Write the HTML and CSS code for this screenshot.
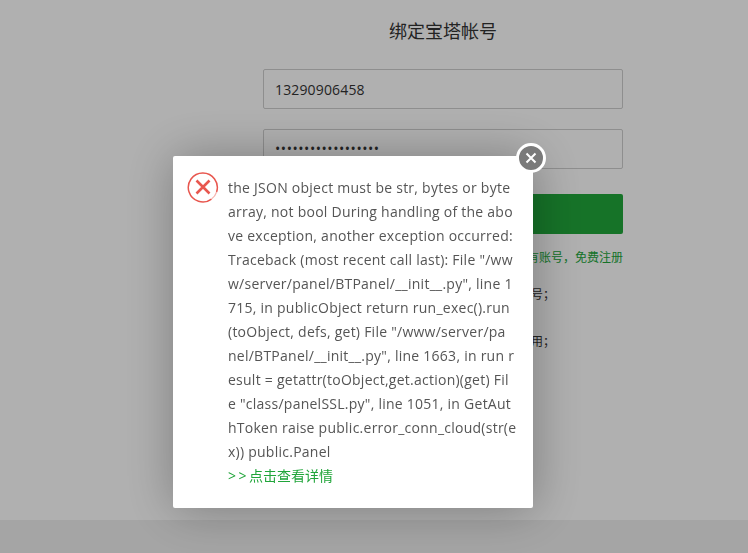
FILE: index.html
```html
<!DOCTYPE html>
<html lang="zh-CN">
<head>
<meta charset="utf-8">
<title>绑定宝塔帐号</title>
<link rel="stylesheet" href="styles.css">
</head>
<body>
<main class="page">
  <form class="bind">
    <h1 class="title">绑定宝塔帐号</h1>
    <div class="field">13290906458</div>
    <div class="field dots">••••••••••••••••••</div>
    <div class="submit"></div>
    <div class="reg">有账号，免费注册</div>
    <div class="tip">号；</div>
    <div class="tip">用；</div>
  </form>
</main>
<footer class="foot"></footer>
<div class="shade"></div>
<div class="dialog">
  <svg class="err" viewBox="0 0 32 32" width="32" height="32" aria-hidden="true">
    <path d="M24.5 28.1A14.5 14.5 0 1 1 29.6 21" fill="none" stroke="#e8574f" stroke-width="1.5"/>
    <path d="M29.6 21A14.5 14.5 0 0 1 24.5 28.1" fill="none" stroke="#f6b5b0" stroke-width="1.2"/>
    <path d="M9.5 9.5 22.5 22.5M22.5 9.5 9.5 22.5" stroke="#e8574f" stroke-width="2.6" fill="none"/>
  </svg>
  <div class="msg">
    <p class="body">the JSON object must be str, bytes or byte<br>array, not bool During handling of the abo<br>ve exception, another exception occurred:<br>Traceback (most recent call last): File "/ww<br>w/server/panel/BTPanel/__init__.py", line 1<br>715, in publicObject return run_exec().run<br>(toObject, defs, get) File "/www/server/pa<br>nel/BTPanel/__init__.py", line 1663, in run r<br>esult = getattr(toObject,get.action)(get) Fil<br>e "class/panelSSL.py", line 1051, in GetAut<br>hToken raise public.error_conn_cloud(str(e<br>x)) public.Panel</p>
    <a class="more"><span class="arrows">&gt;&gt;</span>点击查看详情</a>
  </div>
  <button class="close" type="button" aria-label="关闭">
    <svg viewBox="0 0 12 12" width="12" height="12" aria-hidden="true"><path d="M1.5 1.5 10.5 10.5M10.5 1.5 1.5 10.5" stroke="#fff" stroke-width="2" fill="none"/></svg>
  </button>
</div>
</body>
</html>
```
FILE: styles.css
```css
* { box-sizing: border-box; }
html, body { margin: 0; height: 100%; overflow: hidden; }
body {
  width: 748px;
  height: 553px;
  background: #fcfcfc;
  color: #333;
  font-family: "Open Sans", "Noto Sans CJK SC", sans-serif;
  font-size: 14px;
  display: flex;
  flex-direction: column;
}
.page { height: 520px; display: flex; justify-content: center; }
.foot { height: 33px; background: #ececec; }
.bind { width: 360px; margin-left: 138px; padding-top: 19px; display: flex; flex-direction: column; }
.title {
  margin: 0 0 25px;
  height: 25px;
  text-align: center;
  font-size: 18px;
  line-height: 25px;
  font-weight: 400;
}
.field {
  height: 40px;
  line-height: 40px;
  border: 1px solid #ccc;
  border-radius: 2px;
  padding-left: 11px;
  margin-bottom: 20px;
  letter-spacing: .15px;
}
.dots { line-height: 38px; letter-spacing: .55px; }
.submit { height: 40px; margin: 5px 0 0; border-radius: 2px; background: #20a53a; }
.reg { margin-top: 15px; text-align: right; font-size: 12px; line-height: 18px; color: #20a53a; }
.tip { width: 292px; margin-top: 19px; text-align: right; font-size: 12px; line-height: 18px; }
.tip + .tip { margin-top: 29px; }
.shade { position: fixed; inset: 0; background: rgba(0, 0, 0, .3); }
.dialog {
  position: fixed;
  left: 173px;
  top: 156px;
  width: 360px;
  height: 352px;
  display: flex;
  gap: 9px;
  padding: 15px 20px 0 14px;
  background: #fff;
  border-radius: 2px;
  box-shadow: 1px 1px 50px rgba(0, 0, 0, .3);
}
.err { flex: none; }
.msg { flex: none; width: 290px; margin-top: 5px; }
.body { margin: 0; font-size: 14px; line-height: 24px; letter-spacing: .25px; color: #555; white-space: nowrap; }
.more { display: block; line-height: 24px; color: #20a53a; font-size: 14px; }
.arrows { letter-spacing: 2.5px; }
.close {
  position: absolute;
  right: -13px;
  top: -13px;
  width: 30px;
  height: 30px;
  padding: 0;
  border: 3px solid #fff;
  border-radius: 50%;
  background: #7a7a7a;
  display: flex;
  align-items: center;
  justify-content: center;
}
```
